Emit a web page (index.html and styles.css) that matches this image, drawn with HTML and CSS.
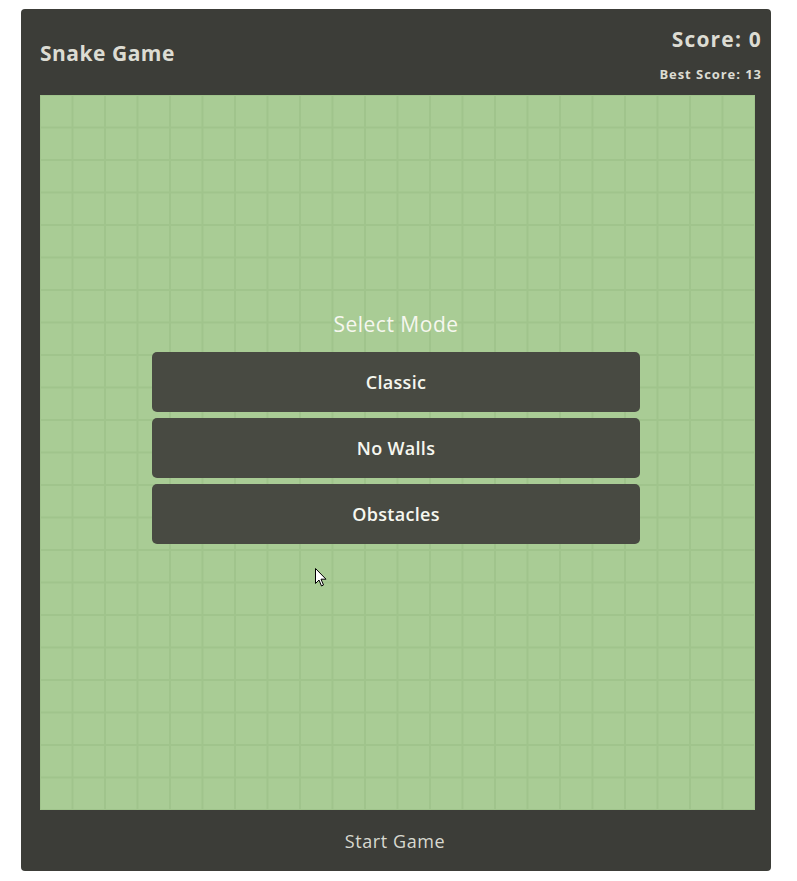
FILE: index.html
```html
<!DOCTYPE html>
<html>
<head>
<meta charset="utf-8">
<link rel="stylesheet" href="styles.css">
</head>
<body>
<div class="game">
  <div class="header">
    <div class="title">Snake Game</div>
    <div class="scores">
      <div class="score">Score: 0</div>
      <div class="best">Best Score: 13</div>
    </div>
  </div>
  <div class="board">
    <div class="overlay">
      <div class="menu-title">Select Mode</div>
      <button class="mode">Classic</button>
      <button class="mode">No Walls</button>
      <button class="mode">Obstacles</button>
    </div>
    <svg class="cursor" width="12" height="19" viewBox="0 0 12 19">
      <path d="M0.5 0.5 L0.5 15.5 L4 12 L6.5 18 L8.5 17 L6 11.2 L11 11.2 Z" fill="#ffffff" stroke="#000000" stroke-width="1" stroke-linejoin="miter"/>
    </svg>
  </div>
  <div class="footer">Start Game</div>
</div>
</body>
</html>
```
FILE: styles.css
```css
html, body {
  margin: 0;
  padding: 0;
  background: #ffffff;
}
body {
  font-family: "Open Sans", "Noto Sans", sans-serif;
}
.game {
  margin: 9px 0 0 21px;
  width: 750px;
  height: 862px;
  background: #3c3d38;
  border-radius: 4px;
  display: flex;
  flex-direction: column;
}
.header {
  height: 86px;
  display: flex;
  justify-content: space-between;
  padding: 0 10px 0 19px;
}
.title {
  color: #dcdcd3;
  font-size: 21px;
  letter-spacing: 0.5px;
  font-weight: 700;
  margin-top: 30px;
  line-height: 28px;
}
.scores {
  display: flex;
  flex-direction: column;
  align-items: flex-end;
}
.score {
  color: #dcdcd3;
  font-size: 21px;
  letter-spacing: 1.2px;
  font-weight: 700;
  margin-top: 16px;
  line-height: 28px;
  margin-right: -1px;
}
.best {
  color: #dcdcd3;
  font-size: 13px;
  letter-spacing: 0.95px;
  font-weight: 700;
  margin-top: 13px;
  line-height: 16px;
  margin-right: -1px;
}
.board {
  position: relative;
  margin-left: 19px;
  width: 715px;
  height: 715px;
  background-color: #a9cc95;
  background-image:
    linear-gradient(to right, #a0c48c 0, #a0c48c 2px, transparent 2px),
    linear-gradient(to bottom, #a0c48c 0, #a0c48c 2px, transparent 2px);
  background-size: 32.5px 32.5px;
  background-position: 31.5px 31.5px;
}
.overlay {
  position: absolute;
  inset: 0;
  display: flex;
  flex-direction: column;
  align-items: center;
  justify-content: center;
  padding-bottom: 46px;
  box-sizing: border-box;
}
.menu-title {
  color: #f6f7ef;
  font-size: 21px;
  letter-spacing: 0.5px;
  line-height: 30px;
  margin-bottom: 13.5px;
  margin-right: 3px;
}
.mode {
  width: 488px;
  height: 60px;
  margin: 0 3px 6px 0;
  border: none;
  border-radius: 5px;
  background: #484a42;
  color: #f6f7ef;
  font-family: "Open Sans", "Noto Sans", sans-serif;
  font-size: 18px;
  letter-spacing: 0.3px;
  font-weight: 600;
  padding: 0;
}
.cursor {
  position: absolute;
  left: 275px;
  top: 473px;
}
.footer {
  flex: 1;
  display: flex;
  align-items: center;
  justify-content: center;
  color: #d8d9d0;
  font-size: 18px;
  letter-spacing: 0.6px;
  font-weight: 500;
  padding-right: 2px;
}
```
